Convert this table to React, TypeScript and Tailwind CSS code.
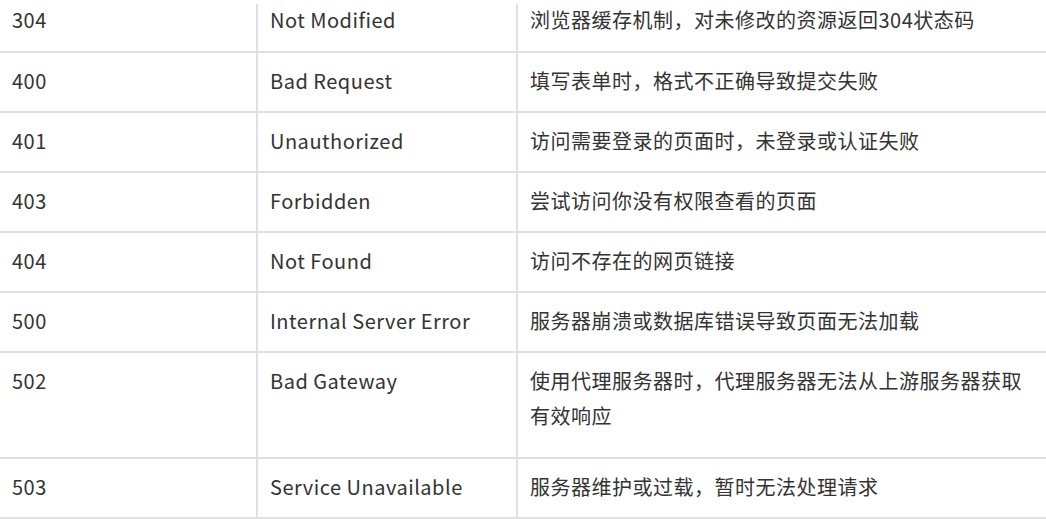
const rows = [
  { code: '400', name: 'Bad Request', desc: '填写表单时，格式不正确导致提交失败' },
  { code: '401', name: 'Unauthorized', desc: '访问需要登录的页面时，未登录或认证失败' },
  { code: '403', name: 'Forbidden', desc: '尝试访问你没有权限查看的页面' },
  { code: '404', name: 'Not Found', desc: '访问不存在的网页链接' },
  { code: '500', name: 'Internal Server Error', desc: '服务器崩溃或数据库错误导致页面无法加载' },
  { code: '502', name: 'Bad Gateway', desc: '使用代理服务器时，代理服务器无法从上游服务器获取有效响应', tall: true },
  { code: '503', name: 'Service Unavailable', desc: '服务器维护或过载，暂时无法处理请求' },
];

const font = { fontFamily: '"Noto Sans CJK SC", "Noto Sans", sans-serif' };

export default function App() {
  return (
    <div className="w-[1046px] h-[519px] overflow-hidden bg-white text-[20px] leading-[35px] tracking-wide text-[#333333]" style={font}>
      {/* first row is cut off at the top of the page */}
      <div className="grid grid-cols-[258px_260px_1fr] pt-[4px] border-b-2 border-[#e0e0e4]">
        <div className="h-[47px] pl-3 border-r-2 border-[#e0e0e4]">
          <div className="-mt-[2px]">304</div>
        </div>
        <div className="h-[47px] pl-3 border-r-2 border-[#e0e0e4]">
          <div className="-mt-[2px]">Not Modified</div>
        </div>
        <div className="h-[47px] pl-3 pr-4">
          <div className="-mt-[2px]">浏览器缓存机制，对未修改的资源返回304状态码</div>
        </div>
      </div>

      {rows.map((r) => (
        <div key={r.code} className="grid grid-cols-[258px_260px_1fr] border-b-2 border-[#e0e0e4]">
          <div className={`${r.tall ? 'h-[104px]' : 'h-[58px]'} pl-3 pt-[10px] border-r-2 border-[#e0e0e4]`}>{r.code}</div>
          <div className={`${r.tall ? 'h-[104px]' : 'h-[58px]'} pl-3 pt-[10px] border-r-2 border-[#e0e0e4]`}>{r.name}</div>
          <div className={`${r.tall ? 'h-[104px]' : 'h-[58px]'} pl-3 pr-4 pt-[10px]`}>{r.desc}</div>
        </div>
      ))}
    </div>
  );
}
